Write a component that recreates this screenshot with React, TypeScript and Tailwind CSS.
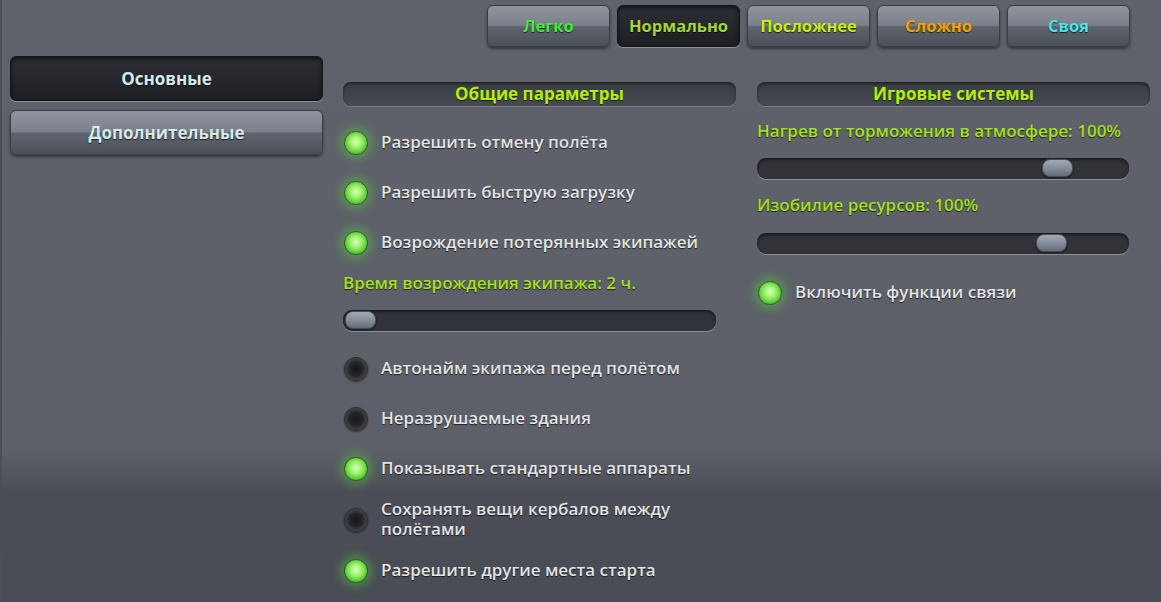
const FONT = "font-['Open_Sans','Noto_Sans',sans-serif]"
const SHADOW = '[text-shadow:0_1px_1px_rgba(0,0,0,0.7)]'

const difficulties = [
  { label: 'Легко', color: 'text-[#44ea3c]' },
  { label: 'Нормально', color: 'text-[#a6d43a]', active: true },
  { label: 'Посложнее', color: 'text-[#c6f014]' },
  { label: 'Сложно', color: 'text-[#f4a400]' },
  { label: 'Своя', color: 'text-[#44e6ea]' },
]

const ACTIVE_BTN =
  'bg-[linear-gradient(to_bottom,#2d2f34,#1d1f23)] border border-[#141518] shadow-[0_1px_0_#8c8f96,inset_0_2px_4px_rgba(0,0,0,0.6)]'
const IDLE_BTN =
  'bg-[linear-gradient(to_bottom,#8f949f,#7b808b_48%,#5f636d_52%,#4c5059)] border border-[#3a3d44] shadow-[0_2px_3px_rgba(0,0,0,0.45)]'

function GlossButton({ label, color, active }: { label: string; color: string; active?: boolean }) {
  return (
    <div
      className={
        'w-[123px] h-full flex items-center justify-center rounded-[6px] font-bold ' +
        color +
        ' ' +
        SHADOW +
        ' ' +
        (active ? ACTIVE_BTN : IDLE_BTN)
      }
    >
      {label}
    </div>
  )
}

function Header({ title }: { title: string }) {
  return (
    <div className="h-[24px] rounded-[8px] flex items-center justify-center bg-[linear-gradient(to_bottom,#393c42,#474a51)] shadow-[inset_0_2px_3px_rgba(0,0,0,0.45),0_1px_0_#7b7e85] text-[17px] font-bold text-[#b4ee10] [text-shadow:0_1px_1px_rgba(0,0,0,0.6)]">
      {title}
    </div>
  )
}

function Toggle({ on, label, h = 'h-[50px]' }: { on: boolean; label: React.ReactNode; h?: string }) {
  return (
    <div className={'flex items-center ' + h}>
      <div
        className={
          'ml-[1px] w-[24px] h-[24px] rounded-full shrink-0 ' +
          (on
            ? 'bg-[radial-gradient(circle_at_50%_45%,#dcffc0_0%,#9af26a_35%,#55c436_70%,#2b7d1e_100%)] shadow-[0_0_10px_4px_rgba(90,220,60,0.4)] border border-[#2f6a25]'
            : 'bg-[radial-gradient(circle_at_50%_50%,#141516_0%,#26272a_45%,#4a4b4e_75%,#80817f_100%)] border border-[#2a2b2e] shadow-[0_1px_2px_rgba(0,0,0,0.5)]')
        }
      />
      <div className={'ml-[13px] pb-[2px] text-[17px] leading-[20px] font-semibold text-[#e2e4e6] ' + SHADOW}>{label}</div>
    </div>
  )
}

function Slider({ pos, mt }: { pos: number; mt: string }) {
  return (
    <div className={'relative h-[21px] rounded-[9px] bg-[#313338] shadow-[inset_0_2px_3px_rgba(0,0,0,0.5),0_1px_0_#8d9096] ' + mt}>
      <div
        className="absolute top-[1px] w-[31px] h-[18px] rounded-[8px] bg-[linear-gradient(to_bottom,#a3abb7,#848d99_50%,#646c77)] border border-[#4a5058] shadow-[0_1px_2px_rgba(0,0,0,0.6)]"
        style={{ left: pos }}
      />
    </div>
  )
}

function GreenLabel({ text, mt }: { text: string; mt: string }) {
  return (
    <div className={'h-[20px] leading-[20px] text-[17px] font-semibold text-[#a4e21c] ' + SHADOW + ' ' + mt}>
      {text}
    </div>
  )
}

export default function App() {
  return (
    <div
      className={
        'w-[1161px] h-[602px] overflow-hidden flex flex-col border-l-2 border-[#4b4e55] bg-[linear-gradient(to_bottom,#5f626a_0px,#5d6068_450px,#4b4e56_492px,#494c54_602px)] ' +
        FONT
      }
    >
      <div className="mt-[5px] h-[42px] flex justify-end gap-[7px] pr-[31px] text-[16.5px]">
        {difficulties.map((d) => (
          <GlossButton key={d.label} label={d.label} color={d.color} active={d.active} />
        ))}
      </div>

      <div className="mt-[9px] flex">
        <div className="ml-[8px] w-[313px] flex flex-col gap-[9px] text-[17px]">
          <div
            className={
              'h-[45px] flex items-center justify-center rounded-[6px] font-bold text-[#d6eaee] ' + SHADOW + ' ' + ACTIVE_BTN
            }
          >
            Основные
          </div>
          <div
            className={
              'h-[45px] flex items-center justify-center rounded-[6px] font-bold text-[#d6eaee] ' + SHADOW + ' ' + IDLE_BTN
            }
          >
            Дополнительные
          </div>
        </div>

        <div className="ml-[20px] w-[393px] pt-[26px] flex flex-col">
          <Header title="Общие параметры" />
          <div className="mt-[12px]">
            <Toggle on label="Разрешить отмену полёта" />
            <Toggle on label="Разрешить быструю загрузку" />
            <Toggle on label="Возрождение потерянных экипажей" />
          </div>
          <GreenLabel text="Время возрождения экипажа: 2 ч." mt="mt-[5px]" />
          <div className="w-[373px]">
            <Slider pos={2} mt="mt-[17px]" />
          </div>
          <div className="mt-[13px]">
            <Toggle on={false} label="Автонайм экипажа перед полётом" />
            <Toggle on={false} label="Неразрушаемые здания" />
            <Toggle on label="Показывать стандартные аппараты" />
            <Toggle
              on={false}
              h="h-[52px]"
              label={
                <>
                  Сохранять вещи кербалов между
                  <br />
                  полётами
                </>
              }
            />
            <Toggle on label="Разрешить другие места старта" />
          </div>
        </div>

        <div className="ml-[21px] w-[393px] pt-[26px] flex flex-col">
          <Header title="Игровые системы" />
          <GreenLabel text="Нагрев от торможения в атмосфере: 100%" mt="mt-[15px]" />
          <div className="w-[372px]">
            <Slider pos={285} mt="mt-[17px]" />
          </div>
          <GreenLabel text="Изобилие ресурсов: 100%" mt="mt-[16px]" />
          <div className="w-[372px]">
            <Slider pos={279} mt="mt-[18px]" />
          </div>
          <div className="mt-[14px]">
            <Toggle on label="Включить функции связи" />
          </div>
        </div>
      </div>
    </div>
  )
}
